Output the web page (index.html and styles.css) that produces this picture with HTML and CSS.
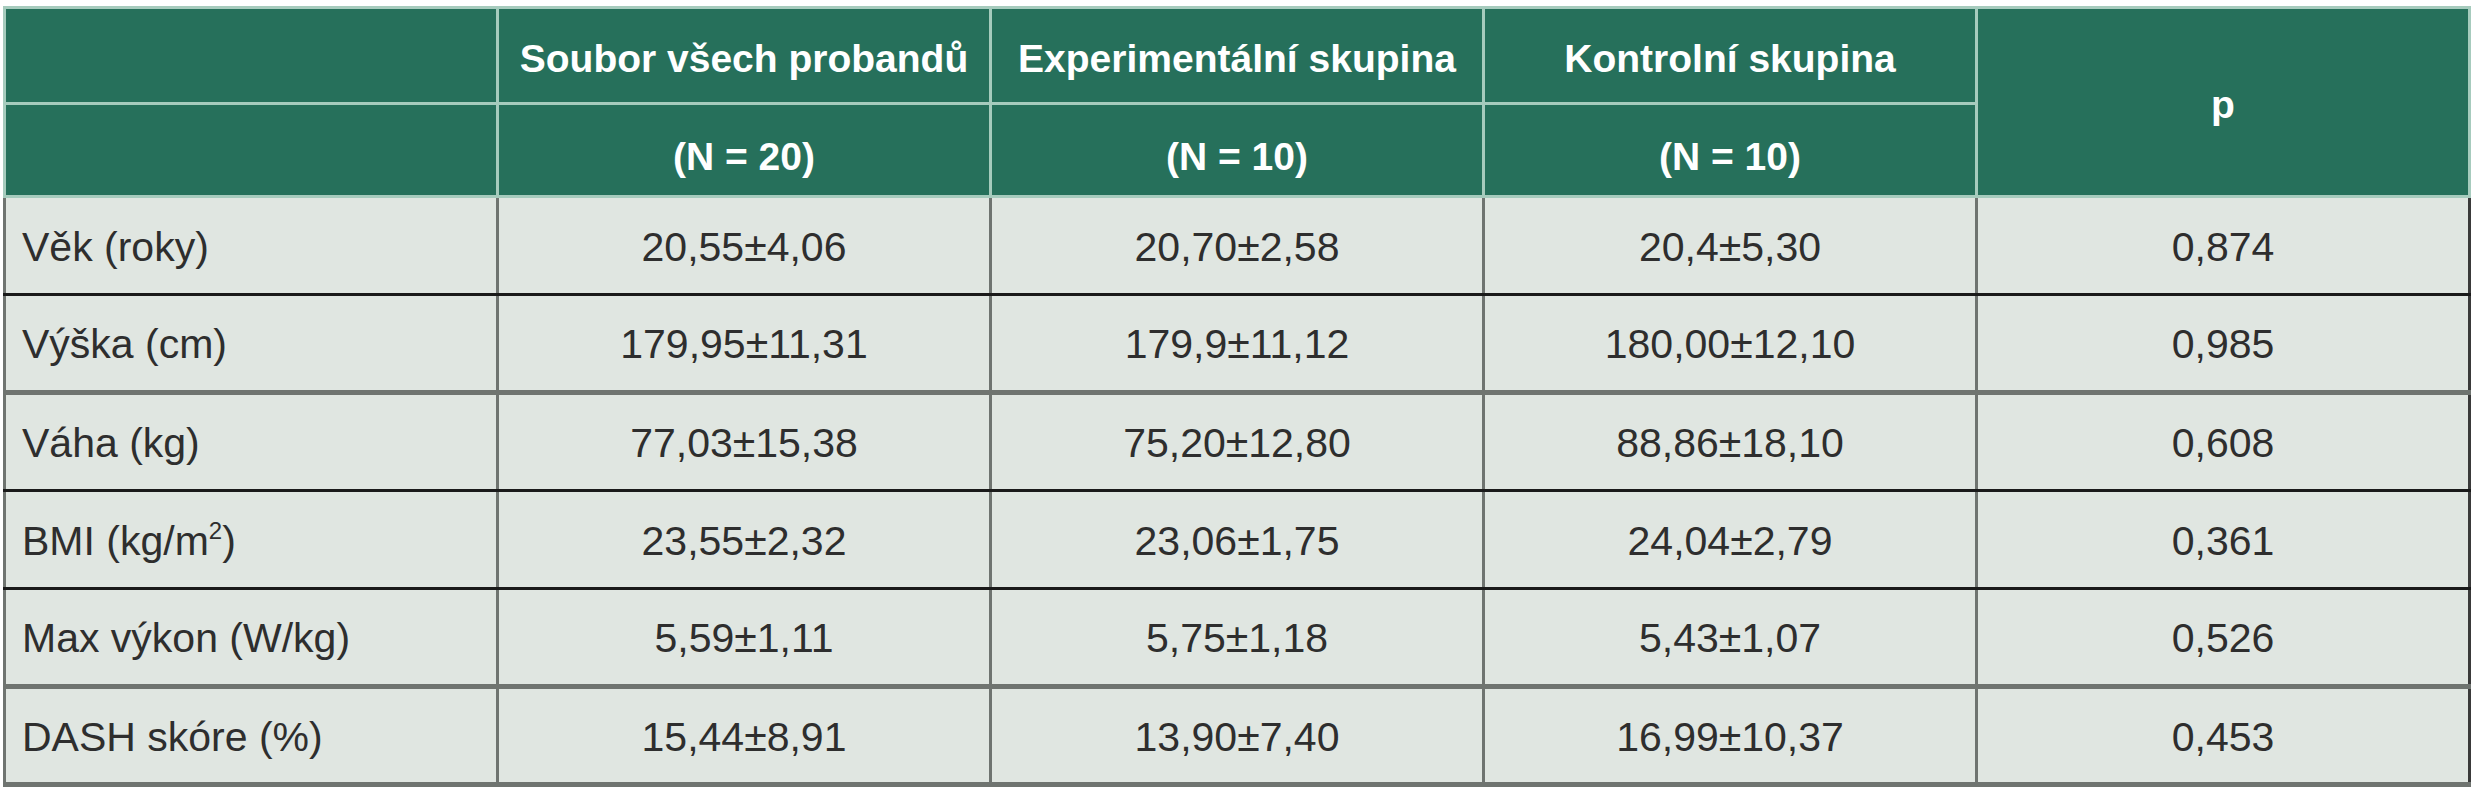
FILE: index.html
```html
<!DOCTYPE html>
<html lang="cs">
<head>
<meta charset="utf-8">
<title>Tabulka</title>
<link rel="stylesheet" href="styles.css">
</head>
<body>
<table class="data-table">
  <colgroup>
    <col class="col"><col class="col"><col class="col"><col class="col"><col class="col">
  </colgroup>
  <thead>
    <tr class="head-row head-row-1">
      <th class="hc hc-first"></th>
      <th class="hc hc-title">Soubor všech probandů</th>
      <th class="hc hc-title">Experimentální skupina</th>
      <th class="hc hc-title">Kontrolní skupina</th>
      <th class="hc hc-p" rowspan="2">p</th>
    </tr>
    <tr class="head-row head-row-2">
      <th class="hc hc-first"></th>
      <th class="hc hc-n">(N = 20)</th>
      <th class="hc hc-n">(N = 10)</th>
      <th class="hc hc-n">(N = 10)</th>
    </tr>
  </thead>
  <tbody>
    <tr class="row line-dark">
      <td class="label">Věk (roky)</td>
      <td class="c1">20,55±4,06</td>
      <td class="c2">20,70±2,58</td>
      <td class="c3">20,4±5,30</td>
      <td class="c4">0,874</td>
    </tr>
    <tr class="row line-grey">
      <td class="label">Výška (cm)</td>
      <td class="c1">179,95±11,31</td>
      <td class="c2">179,9±11,12</td>
      <td class="c3">180,00±12,10</td>
      <td class="c4">0,985</td>
    </tr>
    <tr class="row line-dark">
      <td class="label">Váha (kg)</td>
      <td class="c1">77,03±15,38</td>
      <td class="c2">75,20±12,80</td>
      <td class="c3">88,86±18,10</td>
      <td class="c4">0,608</td>
    </tr>
    <tr class="row line-dark">
      <td class="label">BMI (kg/m<sup class="sup">2</sup>)</td>
      <td class="c1">23,55±2,32</td>
      <td class="c2">23,06±1,75</td>
      <td class="c3">24,04±2,79</td>
      <td class="c4">0,361</td>
    </tr>
    <tr class="row line-grey">
      <td class="label">Max výkon (W/kg)</td>
      <td class="c1">5,59±1,11</td>
      <td class="c2">5,75±1,18</td>
      <td class="c3">5,43±1,07</td>
      <td class="c4">0,526</td>
    </tr>
    <tr class="row line-grey">
      <td class="label">DASH skóre (%)</td>
      <td class="c1">15,44±8,91</td>
      <td class="c2">13,90±7,40</td>
      <td class="c3">16,99±10,37</td>
      <td class="c4">0,453</td>
    </tr>
  </tbody>
</table>
</body>
</html>
```
FILE: styles.css
```css
html, body {
  margin: 0;
  padding: 0;
  background: #ffffff;
}

body {
  padding: 6px 0 0 3px;
  font-family: "Liberation Sans", Arial, sans-serif;
}

.data-table {
  border-collapse: collapse;
  table-layout: fixed;
  width: 2466px;
}

.col {
  width: 493px;
}

.hc {
  background: #26705b;
  color: #ffffff;
  font-weight: bold;
  font-size: 39px;
  text-align: center;
  vertical-align: middle;
  padding: 0;
  border: 3px solid #a6cbbd;
}

.head-row-1 {
  height: 96px;
}

.head-row-2 {
  height: 93px;
}

.hc-title {
  padding-top: 6px;
}

.hc-n {
  padding-top: 14px;
}

.hc-p {
  padding-top: 6px;
}

.row {
  height: 98px;
}

.row td {
  background: #e0e6e1;
  color: #2e2e2e;
  font-size: 41px;
  text-align: center;
  vertical-align: middle;
  padding: 3px 0 0 0;
  border-left: 3px solid #6f7470;
  border-right: 3px solid #6f7470;
}

.row td.label {
  text-align: left;
  padding-left: 16px;
}

.row td.c2 {
  border-left: 3px solid #1c1c1c;
}

.row td.c4 {
  border-left: 3px solid #2a2a2a;
  border-right: 3px solid #3a3a3a;
}

.line-dark td {
  border-bottom: 3px solid #1a1a1a;
}

.line-grey td {
  border-bottom: 5px solid #6f7470;
}

.sup {
  font-size: 24px;
  vertical-align: 16px;
  line-height: 0;
}
```
